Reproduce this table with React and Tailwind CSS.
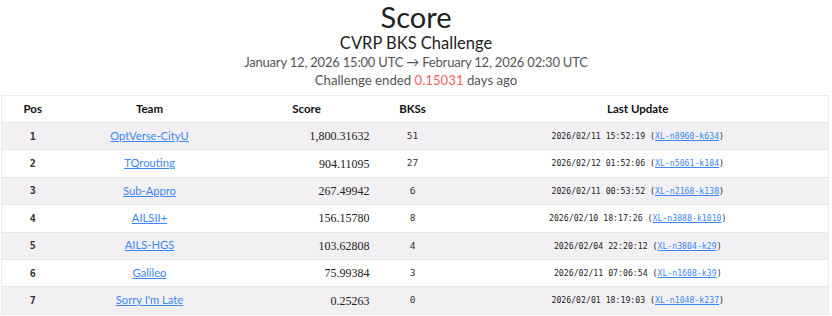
import React from 'react';

const rows = [
    { pos: 1, team: 'OptVerse-CityU', score: '1,800.31632', bks: 51, date: '2026/02/11 15:52:19', inst: 'XL-n8960-k634' },
    { pos: 2, team: 'TQrouting', score: '904.11095', bks: 27, date: '2026/02/12 01:52:06', inst: 'XL-n5061-k184' },
    { pos: 3, team: 'Sub-Appro', score: '267.49942', bks: 6, date: '2026/02/11 00:53:52', inst: 'XL-n2168-k138' },
    { pos: 4, team: 'AILSII+', score: '156.15780', bks: 8, date: '2026/02/10 18:17:26', inst: 'XL-n3888-k1010' },
    { pos: 5, team: 'AILS-HGS', score: '103.62808', bks: 4, date: '2026/02/04 22:20:12', inst: 'XL-n3804-k29' },
    { pos: 6, team: 'Galileo', score: '75.99384', bks: 3, date: '2026/02/11 07:06:54', inst: 'XL-n1608-k39' },
    { pos: 7, team: "Sorry I'm Late", score: '0.25263', bks: 0, date: '2026/02/01 18:19:03', inst: 'XL-n1048-k237' },
];

const sans = "font-['Lato',sans-serif]";
const mono = "font-['DejaVu_Sans_Mono',monospace]";

export default function App() {
    return (
        <div className={`w-[832px] h-[316px] bg-white text-[#222] overflow-hidden ${sans}`}>
            <div className="text-center">
                <h1 className="text-[29px] leading-[33px] text-[#222]">Score</h1>
                <h2 className="text-[16.5px] leading-[20px] text-[#222]">CVRP BKS Challenge</h2>
                <p className="text-[13px] leading-[18px] tracking-[-0.2px] text-[#555]">January 12, 2026 15:00 UTC → February 12, 2026 02:30 UTC</p>
                <p className="text-[13.2px] leading-[18px] text-[#555]">
                    Challenge ended <span className="text-[#f06262]">0.15031</span> days ago
                </p>
            </div>

            <table className="mt-[6px] ml-[1px] w-[828px] border-collapse border border-[#ececec] table-fixed">
                <colgroup>
                    <col className="w-[62px]" />
                    <col className="w-[172px]" />
                    <col className="w-[142px]" />
                    <col className="w-[70px]" />
                    <col />
                </colgroup>
                <thead>
                    <tr className="h-[27px] text-[11.5px] font-bold text-[#111]">
                        <th>Pos</th>
                        <th>Team</th>
                        <th>Score</th>
                        <th>BKSs</th>
                        <th>Last Update</th>
                    </tr>
                </thead>
                <tbody>
                    {rows.map((r, i) => (
                        <tr key={r.pos} className={`h-[27.4px] border-t border-[#e8e6ea] ${i % 2 === 0 ? 'bg-[#f2f0f3]' : 'bg-white'}`}>
                            <td className={`text-center text-[10px] font-bold text-[#333] ${mono}`}>{r.pos}</td>
                            <td className="text-center text-[11.2px]">
                                <a href="#" className="text-[#3b87f0] underline">{r.team}</a>
                            </td>
                            <td className="text-right pr-[8px] text-[12px] text-[#222] font-['Liberation_Serif',serif]">{r.score}</td>
                            <td className={`text-center text-[9.5px] text-[#333] ${mono}`}>{r.bks}</td>
                            <td className={`text-center text-[8.2px] text-[#222] ${mono}`}>
                                {r.date} (<a href="#" className="text-[#3b87f0] underline">{r.inst}</a>)
                            </td>
                        </tr>
                    ))}
                </tbody>
            </table>
        </div>
    );
}
